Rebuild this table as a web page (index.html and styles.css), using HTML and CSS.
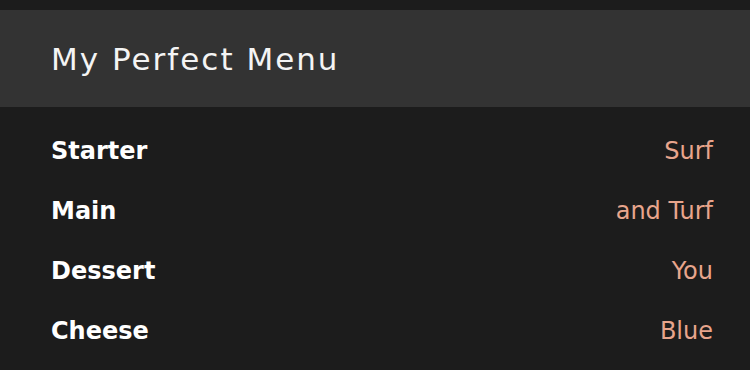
FILE: index.html
```html
<!DOCTYPE html>
<html lang="en">
<head>
<meta charset="UTF-8">
<meta name="viewport" content="width=device-width, initial-scale=1.0">
<title>My Perfect Menu</title>
<link rel="stylesheet" href="styles.css">
</head>
<body>
<div class="page">
    <div class="header">
        <h1 class="title">My Perfect Menu</h1>
    </div>
    <ul class="menu">
        <li class="menu-row"><span class="course">Starter</span><span class="dish">Surf</span></li>
        <li class="menu-row"><span class="course">Main</span><span class="dish">and Turf</span></li>
        <li class="menu-row"><span class="course">Dessert</span><span class="dish">You</span></li>
        <li class="menu-row"><span class="course">Cheese</span><span class="dish">Blue</span></li>
    </ul>
</div>
</body>
</html>
```

FILE: styles.css
```css
body {
    font-family: "DejaVu Sans", sans-serif;
    background-color: #1c1c1c;
    color: #fff;
    margin: 0;
}
.page {
    padding-top: 10px;
    height: 360px;
    overflow: hidden;
}
.header {
    background-color: #333;
    height: 97px;
    display: flex;
    align-items: center;
    padding-left: 51px;
}
.title {
    margin: 0;
    font-size: 31px;
    font-weight: normal;
    letter-spacing: 2px;
    color: #f4f4f4;
}
.menu {
    list-style: none;
    margin: 0;
    padding: 14px 37px 0 51px;
}
.menu-row {
    display: flex;
    justify-content: space-between;
    align-items: center;
    height: 60px;
}
.course {
    font-size: 24px;
    font-weight: bold;
}
.dish {
    font-size: 24px;
    color: #e8a58c;
}
```
